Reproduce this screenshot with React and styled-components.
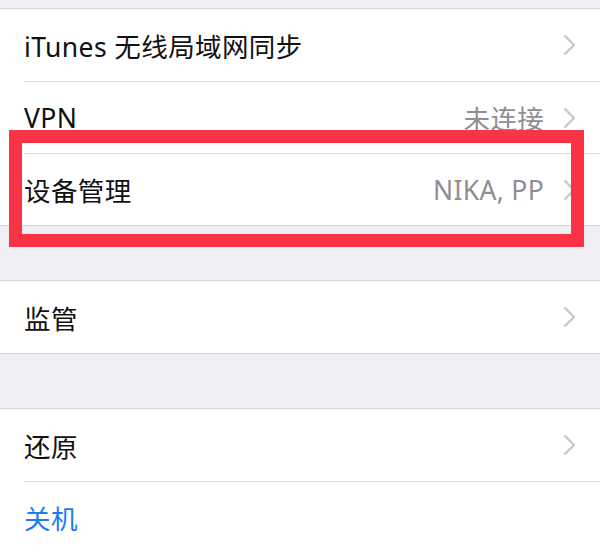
import React from "react";
import styled, { createGlobalStyle } from "styled-components";

const Global = createGlobalStyle`
  html, body { margin: 0; padding: 0; background: #efeff4; }
  body { font-family: "Noto Sans", "Noto Sans CJK SC", sans-serif; }
`;

const Page = styled.div`
  position: relative;
  width: 600px;
  height: 553px;
  overflow: hidden;
  background: #efeff4;
  padding-top: 8px;
  box-sizing: border-box;
  display: flex;
  flex-direction: column;
  gap: 54px;
`;

const Group = styled.div`
  background: #ffffff;
  border-top: 1px solid #d8d8dc;
  border-bottom: 1px solid #d8d8dc;
`;

const Row = styled.div`
  height: 72px;
  margin-left: 24px;
  padding-right: 24px;
  display: flex;
  align-items: center;
  box-sizing: border-box;
  border-top: ${(p) => (p.$first ? "none" : "1px solid #dcdce0")};
`;

const Label = styled.span`
  flex: 1;
  font-size: 26.5px;
  color: ${(p) => (p.$blue ? "#1c7cf0" : "#111111")};
  font-family: "Noto Sans", "Noto Sans CJK SC", sans-serif;
  letter-spacing: 0.4px;
`;

const Value = styled.span`
  font-size: 26.5px;
  color: #8e8e93;
  margin-right: 19px;
  font-family: "Noto Sans", "Noto Sans CJK SC", sans-serif;
  letter-spacing: 0.3px;
`;

const Chevron = () => (
  <svg width="13" height="22" viewBox="0 0 13 22">
    <path d="M2 2 L11 11 L2 20" fill="none" stroke="#c7c7cc" strokeWidth="2.4" strokeLinecap="round" strokeLinejoin="round" />
  </svg>
);

const Highlight = styled.div`
  position: absolute;
  left: 9px;
  top: 130px;
  width: 575px;
  height: 117px;
  border: 13px solid #fa3346;
  box-sizing: border-box;
  pointer-events: none;
`;

const Item = ({ label, value, first, blue, chevron = true }) => (
  <Row $first={first}>
    <Label $blue={blue}>{label}</Label>
    {value && <Value>{value}</Value>}
    {chevron && <Chevron />}
  </Row>
);

export default function App() {
  return (
    <>
      <Global />
      <Page>
        <Group>
          <Item first label="iTunes 无线局域网同步" />
          <Item label="VPN" value="未连接" />
          <Item label="设备管理" value="NIKA, PP" />
        </Group>
        <Group>
          <Item first label="监管" />
        </Group>
        <Group>
          <Item first label="还原" />
          <Item label="关机" blue chevron={false} />
        </Group>
        <Highlight />
      </Page>
    </>
  );
}
